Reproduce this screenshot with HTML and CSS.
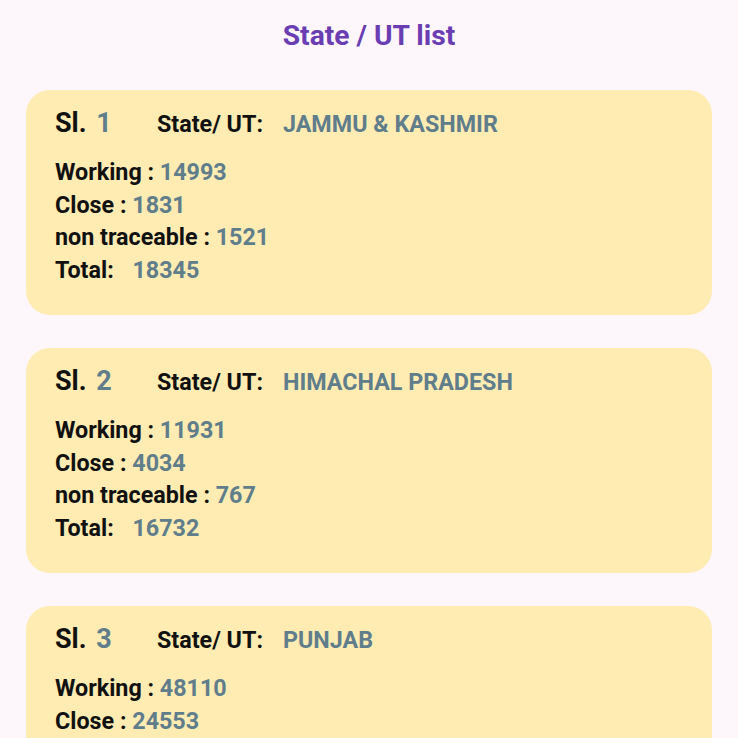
FILE: index.html
```html
<!DOCTYPE html>
<html>
<head>
<meta charset="utf-8">
<link rel="stylesheet" href="styles.css">
</head>
<body>
<div class="page">
  <h1 class="title">State / UT list</h1>
  <div class="list">
    <div class="card">
      <div class="head">
        <span class="sl">Sl. <span class="v">1</span></span>
        <span class="state">State/ UT:</span>
        <span class="sv">JAMMU &amp; KASHMIR</span>
      </div>
      <div class="row">Working : <span class="v">14993</span></div>
      <div class="row">Close : <span class="v">1831</span></div>
      <div class="row">non traceable : <span class="v">1521</span></div>
      <div class="row">Total: <span class="v tv">18345</span></div>
    </div>
    <div class="card">
      <div class="head">
        <span class="sl">Sl. <span class="v">2</span></span>
        <span class="state">State/ UT:</span>
        <span class="sv">HIMACHAL PRADESH</span>
      </div>
      <div class="row">Working : <span class="v">11931</span></div>
      <div class="row">Close : <span class="v">4034</span></div>
      <div class="row">non traceable : <span class="v">767</span></div>
      <div class="row">Total: <span class="v tv">16732</span></div>
    </div>
    <div class="card">
      <div class="head">
        <span class="sl">Sl. <span class="v">3</span></span>
        <span class="state">State/ UT:</span>
        <span class="sv">PUNJAB</span>
      </div>
      <div class="row">Working : <span class="v">48110</span></div>
      <div class="row">Close : <span class="v">24553</span></div>
    </div>
  </div>
</div>
</body>
</html>
```
FILE: styles.css
```css
html, body {
  margin: 0;
  padding: 0;
  background: #fdf7fc;
  font-family: Roboto, "Noto Sans", sans-serif;
  font-weight: 700;
  color: #111;
}
.page {
  padding: 0 26px;
  height: 738px;
  overflow: hidden;
}
.title {
  margin: 0;
  padding-top: 17px;
  height: 90px;
  box-sizing: border-box;
  text-align: center;
  font-size: 28.2px;
  font-weight: 700;
  line-height: 38px;
  color: #6a3db3;
}
.list {
  display: flex;
  flex-direction: column;
  gap: 33px;
}
.card {
  background: #ffecb3;
  border-radius: 24px;
  height: 225px;
  flex-shrink: 0;
  box-sizing: border-box;
  padding: 13px 29px 0;
}
.head {
  display: flex;
  align-items: baseline;
  height: 42px;
  line-height: 40px;
  margin-bottom: 11px;
}
.sl {
  font-size: 27px;
  width: 102px;
  word-spacing: 3px;
}
.state {
  font-size: 23.3px;
}
.sv {
  font-size: 23.3px;
  color: #607d8b;
  margin-left: 20px;
}
.v {
  color: #607d8b;
}
.row {
  font-size: 23.3px;
  line-height: 32.7px;
}
.tv {
  margin-left: 13px;
}
```
